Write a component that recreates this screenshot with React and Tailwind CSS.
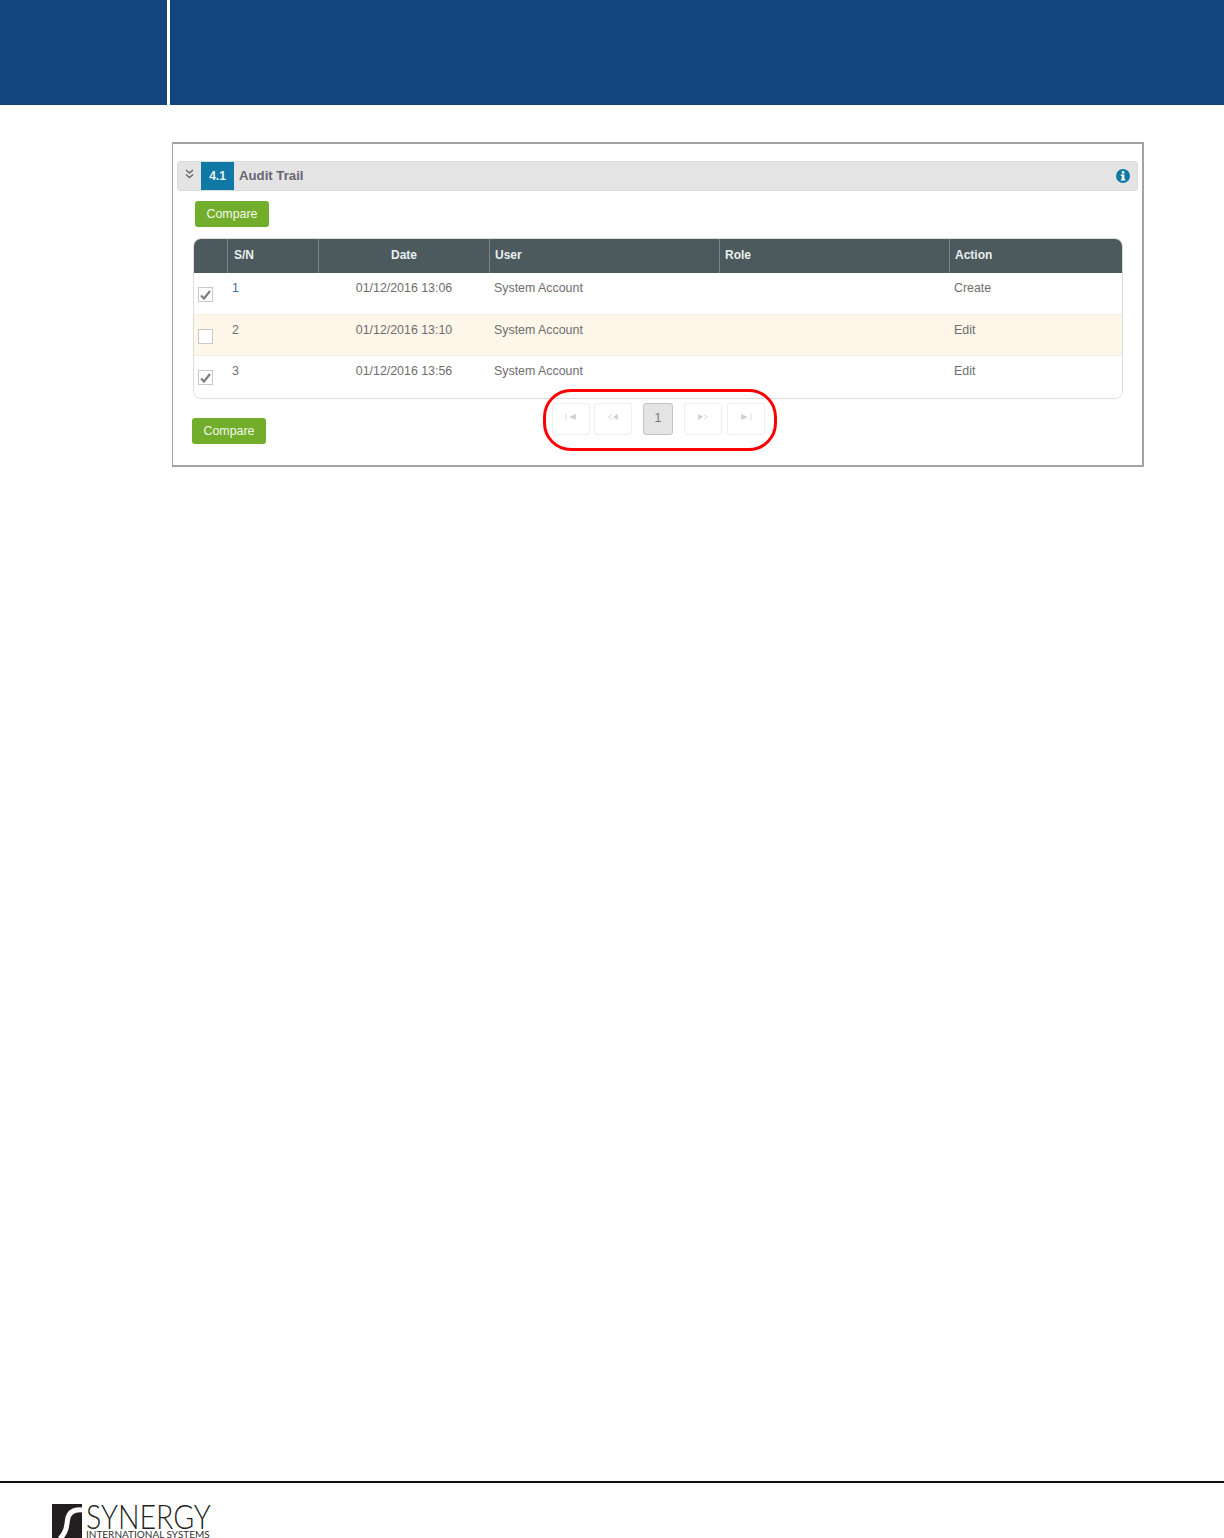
const rows = [
  { sn: "1", date: "01/12/2016 13:06", action: "Create", checked: true, bg: "bg-white", link: true },
  { sn: "2", date: "01/12/2016 13:10", action: "Edit", checked: false, bg: "bg-[#fdf6e9]", link: false },
  { sn: "3", date: "01/12/2016 13:56", action: "Edit", checked: true, bg: "bg-white", link: false },
];

const Chevrons = () => (
  <svg width="9" height="10" viewBox="0 0 9 10" fill="none" stroke="#666" strokeWidth="1.4">
    <path d="M1 1l3.5 3L8 1M1 5.5l3.5 3 3.5-3" />
  </svg>
);

const Compare = ({ className }) => (
  <button className={`w-[74px] h-[26px] rounded-[3px] bg-[#72ae2c] text-[#f2f7ea] text-[12.4px] leading-[26px] text-center ${className}`}>
    Compare
  </button>
);

const Check = () => (
  <svg width="11" height="10" viewBox="0 0 11 10" fill="none" stroke="#7d7d7d" strokeWidth="2.2">
    <path d="M1 5.500l3 3 6-7.500" />
  </svg>
);

const PagerBtn = ({ children, className }) => (
  <div className={`w-[38px] h-[32px] rounded-[3px] border border-[#eeeeee] bg-white flex items-center justify-center pb-[5px] ${className}`}>
    <svg width="12" height="8" viewBox="0 0 12 8" fill="#cfcfcf" stroke="#cfcfcf" strokeWidth="0.7">
      {children}
    </svg>
  </div>
);

const colClass = "grid grid-cols-[34px_91px_171px_230px_230px_1fr]";

export default function App() {
  return (
    <div className="w-[1224px] h-[1538px] bg-white overflow-hidden flex flex-col font-['Liberation_Sans',Arial,sans-serif]">
      <header className="h-[105px] flex shrink-0">
        <div className="w-[167px] bg-[#14457f]" />
        <div className="ml-[3px] flex-1 bg-[#14457f]" />
      </header>

      <section className="ml-[172px] mt-[37px] w-[972px] h-[325px] border-t-2 border-b-2 border-r-2 border-l border-[#a3a3a3] shrink-0 pt-[17px] pl-[4px] pr-[5px] relative">
        <div className="h-[30px] w-[961px] rounded-[3px] border border-[#dcdcdc] bg-[#e4e4e4] flex items-center">
          <span className="w-[23px] flex justify-center -mt-[5px]"><Chevrons /></span>
          <span className="w-[33px] h-[28px] bg-[#0f78a5] text-[#e8f2f6] text-[12px] font-bold flex items-center justify-center">4.1</span>
          <span className="ml-[5px] text-[13.2px] font-bold text-[#666670]">Audit Trail</span>
          <svg className="ml-auto mr-[7px] -mt-[1px]" width="14" height="14" viewBox="0 0 14 14">
            <circle cx="7" cy="7" r="7" fill="#0f78a5" />
            <rect x="5.8" y="2.2" width="2.6" height="2.4" fill="#fff" />
            <path d="M4.8 5.6h3.6v4.6h1v1.4H4.8v-1.4h1V7h-1z" fill="#fff" />
          </svg>
        </div>

        <Compare className="ml-[18px] mt-[10px] block" />

        <div className="ml-[16px] mt-[11px] w-[930px] h-[161px] rounded-[8px] border border-[#dddddd] overflow-hidden">
          <div className={`${colClass} h-[34px] bg-[#4c595d] text-[#e9eef0] text-[12px] font-bold leading-[33px]`}>
            <div className="border-r border-[#7a8487]" />
            <div className="pl-[6px] border-r border-[#7a8487]">S/N</div>
            <div className="text-center border-r border-[#7a8487]">Date</div>
            <div className="pl-[5px] border-r border-[#7a8487]">User</div>
            <div className="pl-[5px] border-r border-[#7a8487]">Role</div>
            <div className="pl-[5px]">Action</div>
          </div>
          {rows.map((r) => (
            <div
              key={r.sn}
              className={`${colClass} h-[41.5px] ${r.bg} text-[12.4px] text-[#6e6e6e] border-b border-[#f4f0e8] last:border-b-0 pt-[8px] leading-[14px]`}
            >
              <div className="pl-[4px] pt-[6px]">
                <div className="w-[15px] h-[15px] border border-[#c8c8c8] bg-white flex items-center justify-center">
                  {r.checked && <Check />}
                </div>
              </div>
              <div className={`pl-[4px] ${r.link ? "text-[#3f6fa5]" : ""}`}>{r.sn}</div>
              <div className="text-center pr-[1px]">{r.date}</div>
              <div className="pl-[4px]">System Account</div>
              <div />
              <div className="pl-[4px]">{r.action}</div>
            </div>
          ))}
        </div>

        <div className="flex items-start mt-[4px] ml-[15px]">
          <Compare className="mt-[15px]" />
          <div className="ml-[286px] flex items-center relative">
            <PagerBtn><path d="M1 0.5v7M10.5 1.5v5L5 4z" /></PagerBtn>
            <PagerBtn className="ml-[4px]"><path d="M10.5 1.5v5L6.5 4z" /><path d="M5.5 1.5L1.5 4l4 2.5" fill="none" /></PagerBtn>
            <div className="ml-[11px] w-[30px] h-[32px] rounded-[3px] border border-[#c4c4c4] bg-[#e4e4e4] text-[12.4px] text-[#777] flex items-center justify-center pb-[2px]">1</div>
            <PagerBtn className="ml-[11px]"><path d="M1.5 1.5v5L5.500 4z" /><path d="M6.5 1.5l4 2.5-4 2.5" fill="none" /></PagerBtn>
            <PagerBtn className="ml-[5px]"><path d="M1.5 1.5v5L7 4z" /><path d="M11 0.5v7" /></PagerBtn>
            <div className="absolute left-[-9px] top-[-14px] w-[234px] h-[62px] rounded-[28px] border-[3px] border-[#ff0000]" />
          </div>
        </div>
      </section>

      <footer className="mt-auto shrink-0">
        <div className="h-[2px] bg-[#111111] mb-[21px]" />
        <div className="h-[34px] ml-[52px] flex overflow-hidden">
          <svg width="30" height="34" viewBox="0 0 30 34" className="shrink-0">
            <rect width="30" height="34" fill="#231f20" />
            <path d="M31 6C21 5 16.500 9 15.500 16C14.500 24 14 28 8 35" fill="none" stroke="#fff" strokeWidth="5" />
          </svg>
          <div className="ml-[4px] flex flex-col">
            <span className="text-[33px] leading-[24px] font-light text-[#231f20] font-['Lato',sans-serif] origin-left scale-x-[0.865] whitespace-nowrap">SYNERGY</span>
            <span className="text-[10px] leading-[10px] mt-[1px] text-[#333] font-['Lato',sans-serif] whitespace-nowrap">INTERNATIONAL SYSTEMS</span>
          </div>
        </div>
      </footer>
    </div>
  );
}
